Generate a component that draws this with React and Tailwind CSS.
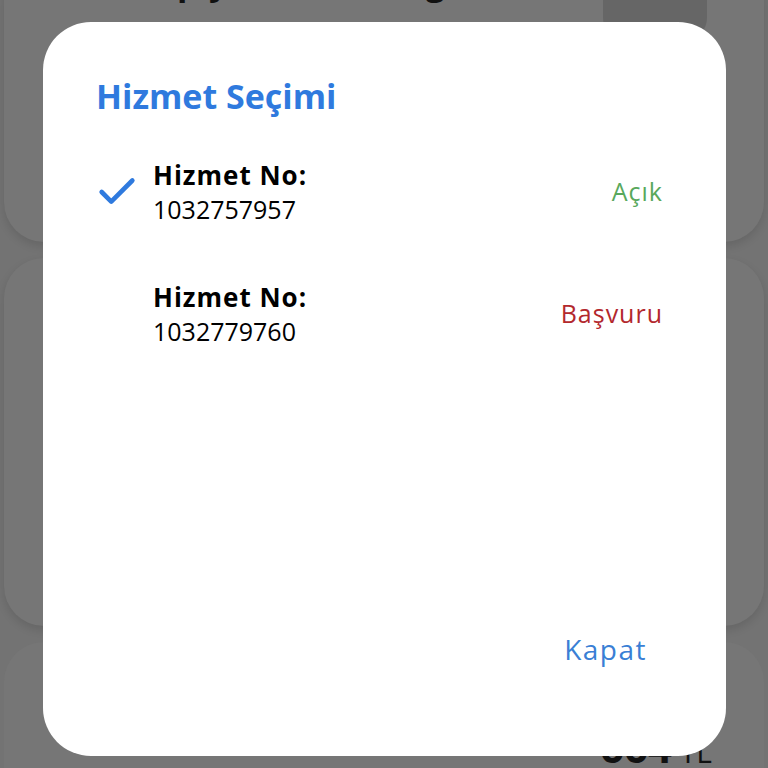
import { Check } from "lucide-react";

const services = [
  { no: "1032757957", status: "Açık", color: "text-[#58a85c]", selected: true },
  { no: "1032779760", status: "Başvuru", color: "text-[#b3282d]", selected: false },
];

function BackgroundPage() {
  return (
    <div className="flex h-full flex-col gap-[16px] bg-[#737373] px-[4px]">
      <div className="relative -mt-[40px] h-[298px] rounded-[40px] bg-[#767676] shadow-[0_4px_10px_rgba(0,0,0,0.12)]">
        <p className="absolute left-[130px] top-[5px] text-[34px] font-bold leading-none text-[#111]">
          Kapıya Kadar Kargo
        </p>
        <div className="absolute right-[57px] top-[10px] h-[70px] w-[104px] rounded-[22px] bg-[#666]" />
      </div>
      <div className="h-[388px] rounded-[40px] bg-[#767676] shadow-[0_4px_10px_rgba(0,0,0,0.12)]" />
      <div className="flex flex-1 items-start justify-between rounded-t-[40px] bg-[#767676] pl-[44px] pt-[44px]">
        <span className="text-[30px] font-bold leading-none text-[#0e3a7a]">A</span>
        <span className="mr-[52px] mt-[40px] whitespace-nowrap leading-none text-[#111]">
          <span className="text-[42px] font-bold">664</span>
          <span className="text-[30px]"> TL</span>
        </span>
      </div>
    </div>
  );
}

export default function App() {
  return (
    <div
      className="relative h-[768px] w-[768px] overflow-hidden"
      style={{ fontFamily: '"Open Sans", "DejaVu Sans", sans-serif' }}
    >
      <BackgroundPage />
      <div className="absolute left-[43px] top-[22px] flex h-[734px] w-[683px] flex-col rounded-[48px] bg-white px-[53px] pb-[86px] pt-[52px]">
        <h2 className="text-[34px] font-bold leading-[44px] text-[#2f7ade]">Hizmet Seçimi</h2>
        <div className="mt-[40px] flex flex-col gap-[54px]">
          {services.map((s) => (
            <div key={s.no} className="flex items-center">
              <div className="w-[57px]">
                {s.selected && <Check className="-ml-[2px] h-[46px] w-[46px] text-[#2f7ade]" strokeWidth={2.4} />}
              </div>
              <div className="flex flex-1 flex-col">
                <span className="text-[26px] font-bold leading-[34px] tracking-[1px] text-black">Hizmet No:</span>
                <span className="text-[25px] leading-[34px] text-black">{s.no}</span>
              </div>
              <span className={`mr-[10px] text-[25px] tracking-[1px] ${s.color}`}>{s.status}</span>
            </div>
          ))}
        </div>
        <div className="mt-auto flex justify-end pr-[26px]">
          <button className="text-[28px] tracking-[1.5px] text-[#3a7fd5]">Kapat</button>
        </div>
      </div>
    </div>
  );
}
